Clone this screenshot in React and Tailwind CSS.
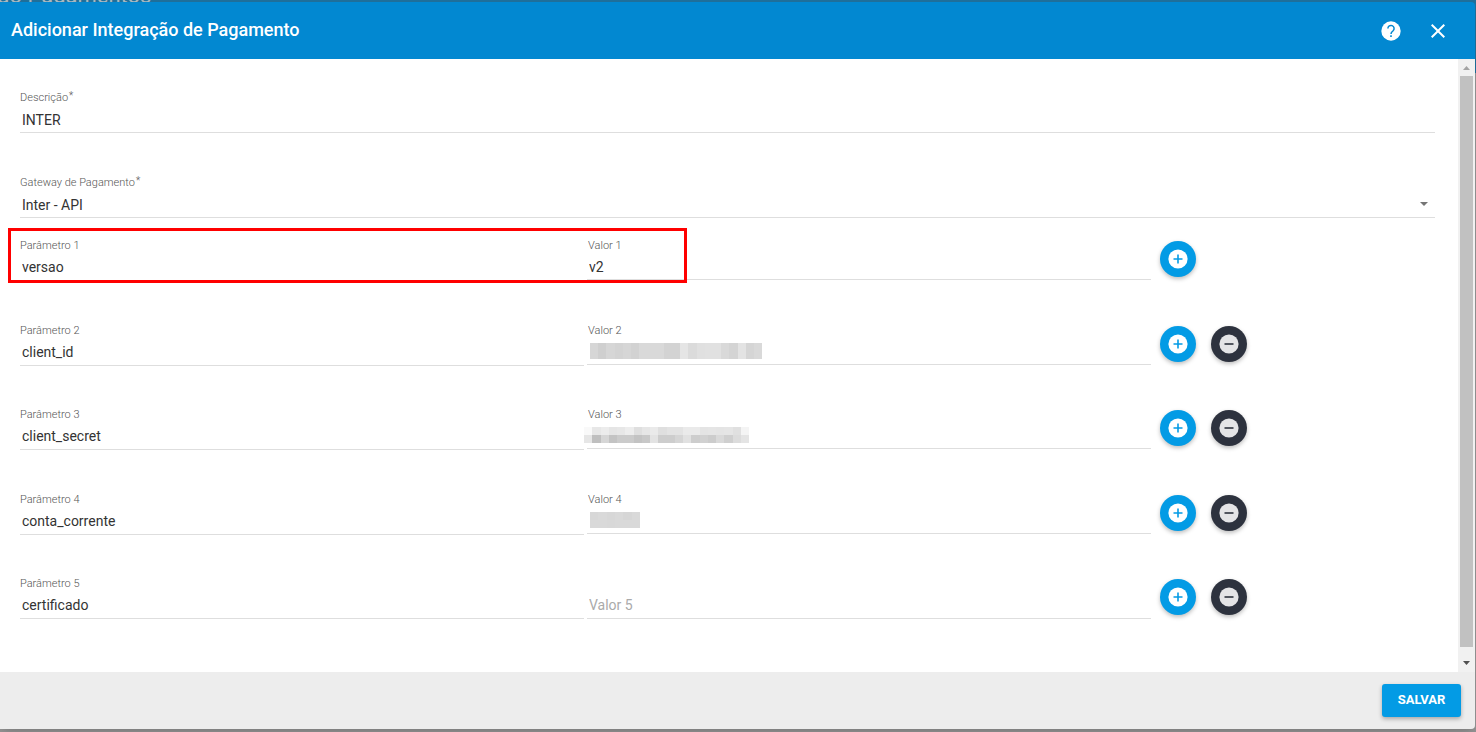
import { useState } from "react";
import { MdClose } from "react-icons/md";

const params = [
  { name: "versao", value: "v2" },
  {
    name: "client_id",
    mask: {
      left: "left-1",
      cell: 8.2,
      rows: [
        "d6 cf d6 d3 d6 d2 d9 d9 d9 d3 d3 e5 db e0 e1 e1 d9 d4 e3 d5 d9",
        "d6 cf d6 d3 d6 d2 d9 d9 d9 d3 d3 e5 db e0 e1 e1 d9 d4 e3 d5 d9",
      ],
    },
  },
  {
    name: "client_secret",
    mask: {
      left: "-left-[2px]",
      cell: 8.25,
      rows: [
        "f9 e7 ec e5 e7 ed df e6 ea df e3 e3 ea ea e4 e5 e4 e5 e0 f4",
        "e6 bf d6 c3 cb cb c3 c8 e3 cd cd d5 e1 cd d1 cc d9 cf dc e4",
      ],
    },
  },
  {
    name: "conta_corrente",
    mask: {
      left: "left-1",
      cell: 8.3,
      rows: ["d7 d9 d7 d9 d6 d9", "d9 d9 d8 d9 d9 d9"],
    },
  },
  { name: "certificado" },
];

const inputClass =
  "block w-full pl-[2px] border-b border-[#dedede] bg-transparent text-sm text-[#333] placeholder:text-[#aaa] outline-none";

function Label({ htmlFor, required, children }) {
  return (
    <label htmlFor={htmlFor} className="block h-4 text-[11px] leading-4 font-light text-[#555]">
      {children}
      {required && <span className="relative -top-[2px] ml-px text-[10px]">*</span>}
    </label>
  );
}

function Mask({ left, cell, rows }) {
  const grid = rows.map((row) => row.split(" "));
  const width = Math.round(grid[0].length * cell);
  return (
    <svg
      className={`absolute top-5 ${left}`}
      width={width}
      height="16"
      shapeRendering="crispEdges"
      aria-hidden="true"
    >
      {grid.map((row, y) =>
        row.map((c, x) => (
          <rect
            key={`${x}-${y}`}
            x={x * cell}
            y={y * 8}
            width={cell}
            height="8"
            fill={`#${c}${c}${c}`}
          />
        ))
      )}
    </svg>
  );
}

function CircleIcon({ minus, color }) {
  return (
    <svg className="size-5" viewBox="0 0 20 20" aria-hidden="true">
      <circle cx="10" cy="10" r="9.600" fill="currentColor" />
      <path
        d={minus ? "M5.500 10h9" : "M5.500 10h9M10 5.500v9"}
        stroke={color}
        strokeWidth="1.600"
        fill="none"
      />
    </svg>
  );
}

function HelpIcon() {
  return (
    <svg className="size-5" viewBox="0 0 20 20" aria-hidden="true">
      <circle cx="10" cy="10" r="9.700" fill="currentColor" />
      <path
        d="M6.900 7.600a3.100 3.100 0 1 1 5.200 2.200c-1.200 1-2.100 1.600-2.100 3.200"
        stroke="#0288d1"
        strokeWidth="1.500"
        fill="none"
      />
      <path d="M9.200 14.300h1.600v1.600H9.200z" fill="#0288d1" />
    </svg>
  );
}

function ParamRow({ index, param, highlight }) {
  const nameId = `param-${index}`;
  const valueId = `value-${index}`;
  const empty = !param.value && !param.mask;
  return (
    <div className="relative flex items-start">
      <div className="w-2/5 pr-[2px]">
        <Label htmlFor={nameId}>Parâmetro {index}</Label>
        <input id={nameId} className={`${inputClass} h-[27px]`} defaultValue={param.name} />
      </div>
      <div className="relative w-2/5 px-px">
        {empty ? (
          <div className="h-4" />
        ) : (
          <div className="pl-px">
            <Label htmlFor={valueId}>Valor {index}</Label>
          </div>
        )}
        <input
          id={valueId}
          className={`${inputClass} ${empty ? "h-[27px]" : "h-[26px]"}`}
          defaultValue={param.value}
          aria-label={`Valor ${index}`}
          placeholder={empty ? `Valor ${index}` : undefined}
        />
        {param.mask && <Mask {...param.mask} />}
      </div>
      <div className="ml-2 mt-[3px] flex gap-[15px]">
        <button
          type="button"
          aria-label="Adicionar parâmetro"
          className="flex size-9 items-center justify-center rounded-full bg-[#039be5] text-white shadow-[0_2px_4px_rgba(0,0,0,0.26)]"
        >
          <CircleIcon color="#039be5" />
        </button>
        {index > 1 && (
          <button
            type="button"
            aria-label="Remover parâmetro"
            className="flex size-9 items-center justify-center rounded-full bg-[#2d323e] text-[#e4e4e6] shadow-[0_2px_4px_rgba(0,0,0,0.26)]"
          >
            <CircleIcon minus color="#2d323e" />
          </button>
        )}
      </div>
      {highlight && (
        <div className="pointer-events-none absolute -top-[10px] -bottom-[2px] -left-3 w-[48%] border-3 border-[#ff0000]" />
      )}
    </div>
  );
}

function ScrollTrack() {
  return (
    <div className="flex w-[17px] shrink-0 flex-col items-center bg-[#f1f1f1]" aria-hidden="true">
      <svg width="17" height="17" viewBox="0 0 17 17" fill="#a3a3a3">
        <path d="M5 11h7L8.500 7z" />
      </svg>
      <div className="w-[13px] flex-1 bg-[#c1c1c1]" />
      <svg className="mt-2" width="17" height="17" viewBox="0 0 17 17" fill="#505050">
        <path d="M5 6h7L8.500 10z" />
      </svg>
    </div>
  );
}

export default function App() {
  const [gateway, setGateway] = useState("inter");

  return (
    <div className="relative h-screen overflow-hidden bg-[#949494] pt-[2px] pr-px pb-[3px] font-[Roboto,sans-serif]">
      <div className="absolute inset-x-0 top-0 h-[73px] bg-[#1f6f9a]">
        <p className="absolute -top-[14px] -left-[3px] text-[22px] leading-5 text-[#a9b8c0]">
          do Pagamentos
        </p>
      </div>

      <div className="relative flex h-full flex-col overflow-hidden rounded-r-[4px] shadow-lg">
        <header className="flex h-[57px] shrink-0 items-center bg-[#0288d1] pr-[25px] pl-[11px] text-white">
          <h1 className="flex-1 pb-[2px] text-lg font-medium">Adicionar Integração de Pagamento</h1>
          <button type="button" aria-label="Ajuda">
            <HelpIcon />
          </button>
          <button type="button" aria-label="Fechar" className="ml-[25px]">
            <MdClose className="size-6" />
          </button>
        </header>

        <main className="flex min-h-0 flex-1 bg-white">
          <form id="integracao" className="flex flex-1 flex-col pt-[31px] pr-[23px] pb-[53px] pl-5">
            <div>
              <Label htmlFor="descricao" required>
                Descrição
              </Label>
              <input id="descricao" className={`${inputClass} h-[27px] pt-[2px]`} defaultValue="INTER" />
            </div>

            <div className="mt-[42px]">
              <Label htmlFor="gateway" required>
                Gateway de Pagamento
              </Label>
              <div className="relative">
                <select
                  id="gateway"
                  className={`${inputClass} h-[27px] appearance-none pt-[2px]`}
                  value={gateway}
                  onChange={(e) => setGateway(e.target.value)}
                >
                  <option value="inter">Inter - API</option>
                </select>
                <svg
                  className="pointer-events-none absolute top-[11px] right-[7px]"
                  width="8"
                  height="4"
                  fill="#757575"
                >
                  <path d="M0 0h8L4 4z" />
                </svg>
              </div>
            </div>

            <div className="mt-5 flex flex-1 flex-col justify-between">
              {params.map((param, i) => (
                <ParamRow key={param.name} index={i + 1} param={param} highlight={i === 0} />
              ))}
            </div>
          </form>
          <ScrollTrack />
        </main>

        <footer className="flex h-[57px] shrink-0 items-center justify-end bg-[#ededed] pr-[14px]">
          <button
            type="submit"
            form="integracao"
            className="h-[33px] w-[79px] rounded-[3px] bg-[#039be5] pb-[2px] text-[13px] font-bold text-white shadow-[0_2px_4px_rgba(0,0,0,0.3)]"
          >
            SALVAR
          </button>
        </footer>
      </div>
    </div>
  );
}
